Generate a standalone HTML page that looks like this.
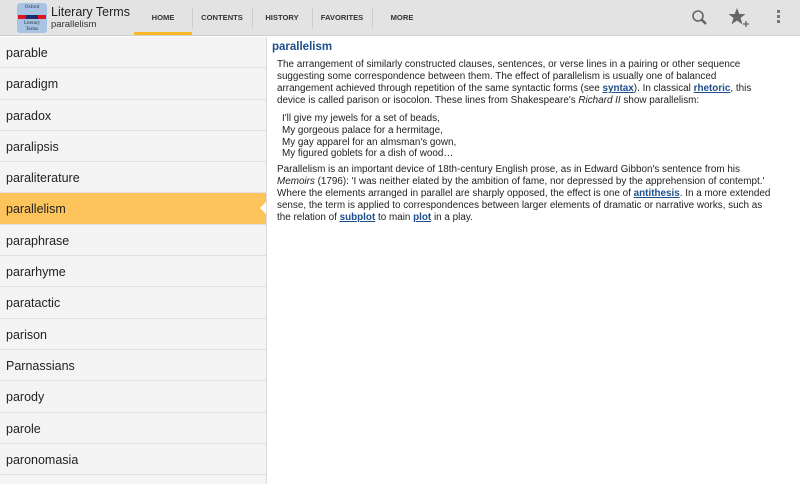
<!DOCTYPE html>
<html><head><style>
body{margin:0;width:800px;height:484px;overflow:hidden;font-family:"Liberation Sans",sans-serif;background:#fff;position:relative}
#hdr{position:absolute;left:0;top:0;width:800px;height:35px;background:#e3e3e3;border-bottom:1px solid #cfcfcf}
.logo{position:absolute;left:17px;top:3px;width:30px;height:30px;background:#a9c3e3;border-radius:3px}
.logo .bar{position:absolute;left:1px;top:12px;width:28px;height:4px;background:#e0141e}
.logo .bar i{position:absolute;left:8px;top:0;width:12px;height:4px;background:#1b2f6e}
.logo span{position:absolute;width:30px;text-align:center;font-family:"Liberation Serif",serif;font-size:5px;color:#234}
.t1{position:absolute;left:51px;top:5px;font-size:12.5px;color:#222}
.t2{position:absolute;left:51px;top:19px;font-size:9.5px;color:#333}
.tab{position:absolute;top:13px;font-size:7.6px;font-weight:bold;color:#333;text-align:center}
.sep{position:absolute;top:8px;width:1px;height:20px;background:#cdcdcd}
#list{position:absolute;left:0;top:37px;width:266px;height:447px;overflow:hidden;background:#f4f4f4;border-right:1px solid #ddd}
.row{height:30.3px;border-bottom:1px solid #e0e0e0;font-size:12.5px;color:#222;line-height:32px;padding-left:6px;overflow:hidden}
.row.sel{background:#fdc45c;position:relative;overflow:visible}
.row.sel:after{content:"";position:absolute;right:-1px;top:8px;border:7px solid transparent;border-right-color:#fff}
#c{position:absolute;left:272px;top:41px;width:522px;color:#222;font-size:9.9px;line-height:12px;white-space:nowrap}
h1{margin:0 0 6px;font-size:11.5px;color:#1e4e8c;font-weight:bold}
p{margin:0 0 0 5px}
a{color:#1e4e8c;font-weight:bold;text-decoration:underline}
.v{margin:6px 0 4px 10px;line-height:11.8px}
</style></head><body>
<div id="hdr">
<div class="logo"><span style="top:2px">Oxford</span><div class="bar"><i></i></div><span style="top:18px">Literary</span><span style="top:24px">Terms</span></div>
<div class="t1">Literary Terms</div><div class="t2">parallelism</div>
<div class="tab" style="left:134px;width:58px">HOME</div>
<div style="position:absolute;left:134px;top:32px;width:58px;height:3px;background:#fbb929"></div>
<div class="sep" style="left:192px"></div>
<div class="tab" style="left:192px;width:60px">CONTENTS</div>
<div class="sep" style="left:252px"></div>
<div class="tab" style="left:252px;width:60px">HISTORY</div>
<div class="sep" style="left:312px"></div>
<div class="tab" style="left:312px;width:60px">FAVORITES</div>
<div class="sep" style="left:372px"></div>
<div class="tab" style="left:372px;width:60px">MORE</div>
<svg style="position:absolute;left:690px;top:8px" width="20" height="20"><circle cx="8" cy="8" r="5" fill="none" stroke="#666" stroke-width="1.6"/><line x1="11.5" y1="11.5" x2="16" y2="16" stroke="#666" stroke-width="2.5"/></svg>
<svg style="position:absolute;left:728px;top:7px" width="24" height="22"><polygon points="9,1 11.3,7 17.5,7 12.5,11 14.5,17.5 9,13.5 3.5,17.5 5.5,11 0.5,7 6.7,7" fill="#666"/><path d="M15 17h6M18 14v6" stroke="#666" stroke-width="1.3"/></svg>
<svg style="position:absolute;left:776px;top:9px" width="6" height="16"><rect x="1" y="1" width="3" height="3" fill="#777"/><rect x="1" y="6" width="3" height="3" fill="#777"/><rect x="1" y="11" width="3" height="3" fill="#777"/></svg>
</div>
<div id="list">
<div class="row">parable</div><div class="row">paradigm</div><div class="row">paradox</div><div class="row">paralipsis</div><div class="row">paraliterature</div><div class="row sel">parallelism</div><div class="row">paraphrase</div><div class="row">pararhyme</div><div class="row">paratactic</div><div class="row">parison</div><div class="row">Parnassians</div><div class="row">parody</div><div class="row">parole</div><div class="row">paronomasia</div><div class="row"></div>
</div>
<div id="c">
<h1>parallelism</h1>
<p>The arrangement of similarly constructed clauses, sentences, or verse lines in a pairing or other sequence<br>suggesting some correspondence between them. The effect of parallelism is usually one of balanced<br>arrangement achieved through repetition of the same syntactic forms (see <a>syntax</a>). In classical <a>rhetoric</a>, this<br>device is called parison or isocolon. These lines from Shakespeare's <i>Richard II</i> show parallelism:</p>
<div class="v">I'll give my jewels for a set of beads,<br>My gorgeous palace for a hermitage,<br>My gay apparel for an almsman's gown,<br>My figured goblets for a dish of wood…</div>
<p>Parallelism is an important device of 18th-century English prose, as in Edward Gibbon's sentence from his<br><i>Memoirs</i> (1796): 'I was neither elated by the ambition of fame, nor depressed by the apprehension of contempt.'<br>Where the elements arranged in parallel are sharply opposed, the effect is one of <a>antithesis</a>. In a more extended<br>sense, the term is applied to correspondences between larger elements of dramatic or narrative works, such as<br>the relation of <a>subplot</a> to main <a>plot</a> in a play.</p>
</div>
</body></html>
